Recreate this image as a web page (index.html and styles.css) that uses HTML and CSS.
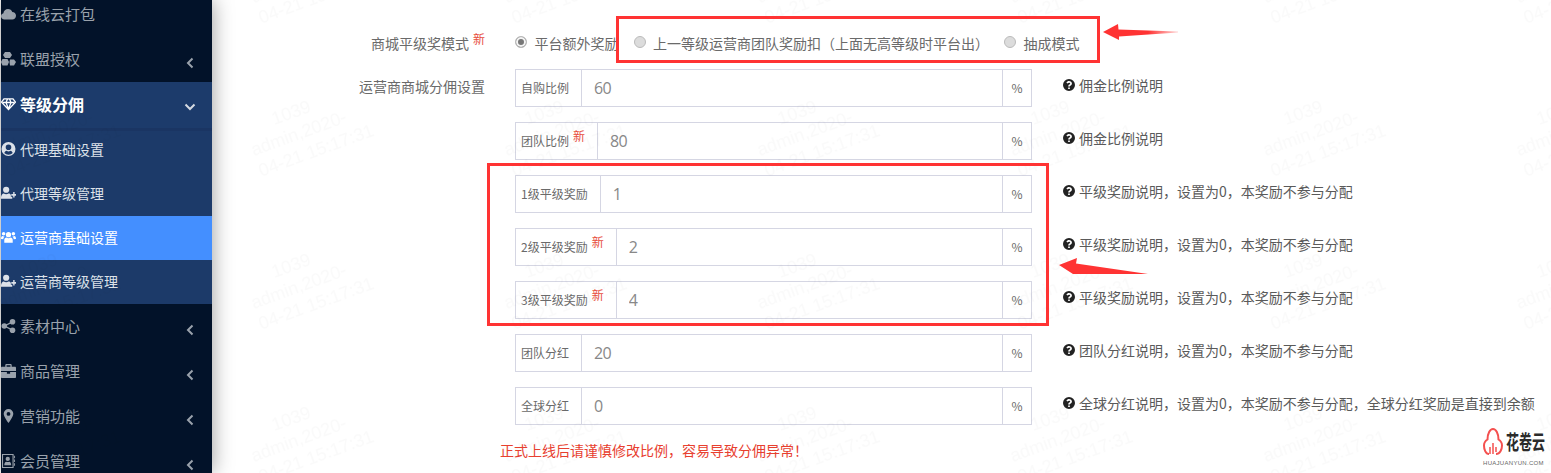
FILE: index.html
```html
<html>

<head>
	<title>运营商基础设置</title>
	<link rel="stylesheet" href="styles.css">
</head>

<body>
	<svg width="0" height="0" class="icon-defs">
		<defs>
			<symbol id="i-help" viewBox="0 0 24 24">
				<path fill-rule="evenodd" d="M12 0a12 12 0 1 0 0 24 12 12 0 0 0 0-24zM10.300 17h3.400v3.200h-3.400zM12 4c3.300 0 5.800 2 5.800 4.900 0 2.100-1.200 3.100-2.500 4-1 .7-1.600 1.200-1.600 2.300h-3.400c0-2.300 1.100-3.400 2.500-4.300 1-.7 1.600-1.100 1.600-1.900 0-1-.9-1.700-2.200-1.700-1.200 0-2.200.8-2.900 1.900L6.800 7.300C8 5.200 9.700 4 12 4z" />
			</symbol>
			<symbol id="i-left" viewBox="0 0 8 12">
				<path d="M6.500 1.500 2 6l4.500 4.500" fill="none" stroke="currentColor" stroke-width="2" />
			</symbol>
			<symbol id="i-down" viewBox="0 0 12 8">
				<path d="M1.500 1.500 6 6l4.500-4.500" fill="none" stroke="currentColor" stroke-width="2" />
			</symbol>
			<symbol id="i-user-plus" viewBox="0 0 16 14">
				<circle cx="5.500" cy="3.500" r="3.300" />
				<path d="M0 13c0-4 1.500-5.500 3-5.500 1.500 1 3.500 1 5 0 1 0 2 .5 2.500 1.500v2H12v2H1z" />
				<path d="M11 8h2V6h1.500v2H16v1.800h-1.500v2H13v-2h-2z" />
			</symbol>
		</defs>
	</svg>

	<div class="page">
		<aside class="sidebar">
			<ul class="menu">
				<li class="menu__item">
					<svg class="menu__icon" viewBox="0 0 15 12"><path d="M3.500 11.500C1.500 11.500 0 10 0 8.200 0 6.700 1 5.500 2.400 5.200 2.700 2.800 4.600 1 7 1c2 0 3.700 1.200 4.300 3 2 0 3.700 1.700 3.700 3.700 0 2.100-1.700 3.800-3.700 3.800z" /></svg>
					<span>在线云打包</span>
				</li>
				<li class="menu__item">
					<svg class="menu__icon" viewBox="0 0 15 14"><path d="M4 0h5l2 3-2 3H4L2 3zM1.500 7h5l1.500 3-1.500 3.500h-5L0 10zM9 7.500h4l2 2.500-2 3.500H9l-.500-3.500z" /></svg>
					<span>联盟授权</span>
					<svg class="menu__arrow"><use href="#i-left" /></svg>
				</li>
				<li class="menu__item menu__item--open">
					<svg class="menu__icon" viewBox="0 0 15 12"><path d="M3 .8h9l2.500 3.400L7.500 11.500.5 4.200zM1.800 4.500h11.400M5 4.500 7.500 11l2.500-6.500M5 4.500 6.500 1M10 4.500 8.500 1" fill="none" stroke="currentColor" stroke-width="1.300" /></svg>
					<span>等级分佣</span>
					<svg class="menu__arrow menu__arrow--down"><use href="#i-down" /></svg>
				</li>
				<li>
					<ul class="submenu">
						<li class="submenu__item">
							<svg class="menu__icon" viewBox="0 0 14 14"><path fill-rule="evenodd" d="M7 0a7 7 0 1 0 0 14A7 7 0 0 0 7 0zm0 2.500a2.800 2.800 0 1 1 0 5.600 2.800 2.800 0 0 1 0-5.600zM2.800 11c.6-1.600 1.500-2.300 2.400-2.300.5.500 1.100.7 1.800.7s1.300-.2 1.800-.7c.9 0 1.800.7 2.400 2.300A5.500 5.500 0 0 1 7 12.800 5.500 5.500 0 0 1 2.800 11z" /></svg>
							<span>代理基础设置</span>
						</li>
						<li class="submenu__item">
							<svg class="menu__icon"><use href="#i-user-plus" /></svg>
							<span>代理等级管理</span>
						</li>
						<li class="submenu__item submenu__item--active">
							<svg class="menu__icon" viewBox="0 0 16 13"><circle cx="8" cy="4" r="2.800" /><circle cx="2.800" cy="3" r="1.900" /><circle cx="13.200" cy="3" r="1.900" /><path d="M3.500 12.500V9.500C3.500 8 4.500 7 5.800 7c1.300 1 3.100 1 4.400 0 1.300 0 2.300 1 2.300 2.500v3zM0 8.500C0 6.500 .8 5.500 1.600 5.500c.8.500 1.500.6 2.300.4-.6.600-1.400 1.300-1.400 3.100zM16 8.500c0-2-.8-3-1.600-3-.8.500-1.500.6-2.300.4.600.6 1.400 1.300 1.400 3.100z" /></svg>
							<span>运营商基础设置</span>
						</li>
						<li class="submenu__item">
							<svg class="menu__icon"><use href="#i-user-plus" /></svg>
							<span>运营商等级管理</span>
						</li>
					</ul>
				</li>
				<li class="menu__item">
					<svg class="menu__icon" viewBox="0 0 14 14"><circle cx="2.800" cy="7" r="2.800" /><circle cx="11" cy="2.800" r="2.800" /><circle cx="11" cy="11.200" r="2.800" /><path d="M3 7l8-4.200M3 7l8 4.200" fill="none" stroke="currentColor" stroke-width="1.400" /></svg>
					<span>素材中心</span>
					<svg class="menu__arrow"><use href="#i-left" /></svg>
				</li>
				<li class="menu__item">
					<svg class="menu__icon" viewBox="0 0 14 13"><path fill-rule="evenodd" d="M4 2.500V1.200C4 .5 4.500 0 5.200 0h3.600C9.500 0 10 .5 10 1.200v1.300h3c.6 0 1 .4 1 1V6.500H0V3.500c0-.6.4-1 1-1zM5.200 1.200v1.300h3.600V1.200zM0 7.500h5.500v1.500h3V7.500H14v4.500c0 .6-.4 1-1 1H1c-.6 0-1-.4-1-1z" /></svg>
					<span>商品管理</span>
					<svg class="menu__arrow"><use href="#i-left" /></svg>
				</li>
				<li class="menu__item">
					<svg class="menu__icon" viewBox="0 0 14 14"><path fill-rule="evenodd" d="M7 0a4.800 4.800 0 0 0-4.800 4.800C2.200 8 7 14 7 14s4.800-6 4.800-9.200A4.800 4.800 0 0 0 7 0zm0 3a1.900 1.900 0 1 1 0 3.800A1.900 1.900 0 0 1 7 3z" /></svg>
					<span>营销功能</span>
					<svg class="menu__arrow"><use href="#i-left" /></svg>
				</li>
				<li class="menu__item">
					<svg class="menu__icon" viewBox="0 0 14 15"><path fill-rule="evenodd" d="M0 0h12.500v15H0zM1.200 1.200v12.600h10.100V1.200zM6.200 3a2.300 2.300 0 1 1 0 4.600 2.300 2.300 0 0 1 0-4.600zM2.500 12c0-2.500 1-3.800 2-3.800 1 .6 2.400.6 3.400 0 1 0 2 1.300 2 3.800zM13 2h1v2.500h-1zM13 6h1v2.500h-1zM13 10h1v2.500h-1z" /></svg>
					<span>会员管理</span>
					<svg class="menu__arrow"><use href="#i-left" /></svg>
				</li>
			</ul>
		</aside>

		<main class="main">
			<form class="form">
				<div class="form__row form__row--radio">
					<label class="form__label">商城平级奖模式<sup class="badge">新</sup></label>
					<div class="radios">
						<label class="radio"><input type="radio" name="mode" checked>平台额外奖励</label>
						<label class="radio"><input type="radio" name="mode">上一等级运营商团队奖励扣（上面无高等级时平台出）</label>
						<label class="radio"><input type="radio" name="mode">抽成模式</label>
					</div>
				</div>

				<div class="form__row">
					<label class="form__label">运营商商城分佣设置</label>
					<div class="input-group">
						<span class="input-group__addon">自购比例</span>
						<input class="input-group__input" type="text" value="60">
						<span class="input-group__unit">%</span>
					</div>
					<p class="help"><svg class="help__icon"><use href="#i-help" /></svg>佣金比例说明</p>
				</div>

				<div class="form__row">
					<span class="form__label"></span>
					<div class="input-group">
						<span class="input-group__addon">团队比例<sup class="badge">新</sup></span>
						<input class="input-group__input" type="text" value="80">
						<span class="input-group__unit">%</span>
					</div>
					<p class="help"><svg class="help__icon"><use href="#i-help" /></svg>佣金比例说明</p>
				</div>

				<div class="form__row">
					<span class="form__label"></span>
					<div class="input-group">
						<span class="input-group__addon">1级平级奖励</span>
						<input class="input-group__input" type="text" value="1">
						<span class="input-group__unit">%</span>
					</div>
					<p class="help"><svg class="help__icon"><use href="#i-help" /></svg>平级奖励说明，设置为0，本奖励不参与分配</p>
				</div>

				<div class="form__row">
					<span class="form__label"></span>
					<div class="input-group">
						<span class="input-group__addon">2级平级奖励<sup class="badge">新</sup></span>
						<input class="input-group__input" type="text" value="2">
						<span class="input-group__unit">%</span>
					</div>
					<p class="help"><svg class="help__icon"><use href="#i-help" /></svg>平级奖励说明，设置为0，本奖励不参与分配</p>
				</div>

				<div class="form__row">
					<span class="form__label"></span>
					<div class="input-group">
						<span class="input-group__addon">3级平级奖励<sup class="badge">新</sup></span>
						<input class="input-group__input" type="text" value="4">
						<span class="input-group__unit">%</span>
					</div>
					<p class="help"><svg class="help__icon"><use href="#i-help" /></svg>平级奖励说明，设置为0，本奖励不参与分配</p>
				</div>

				<div class="form__row">
					<span class="form__label"></span>
					<div class="input-group">
						<span class="input-group__addon">团队分红</span>
						<input class="input-group__input" type="text" value="20">
						<span class="input-group__unit">%</span>
					</div>
					<p class="help"><svg class="help__icon"><use href="#i-help" /></svg>团队分红说明，设置为0，本奖励不参与分配</p>
				</div>

				<div class="form__row">
					<span class="form__label"></span>
					<div class="input-group">
						<span class="input-group__addon">全球分红</span>
						<input class="input-group__input" type="text" value="0">
						<span class="input-group__unit">%</span>
					</div>
					<p class="help"><svg class="help__icon"><use href="#i-help" /></svg>全球分红说明，设置为0，本奖励不参与分配，全球分红奖励是直接到余额</p>
				</div>

				<p class="form__error">正式上线后请谨慎修改比例，容易导致分佣异常！</p>
			</form>
		</main>
	</div>

	<!-- watermark over the form -->
	<svg class="watermark">
		<defs>
			<pattern id="wm" width="253" height="153" patternUnits="userSpaceOnUse" patternTransform="translate(240 57)">
				<g transform="rotate(-20 60 80)" class="watermark__text">
					<text x="40" y="60">1039</text>
					<text x="10" y="82">admin,2020-</text>
					<text x="10" y="104">04-21 15:17:31</text>
				</g>
			</pattern>
		</defs>
		<rect width="100%" height="100%" fill="url(#wm)" />
	</svg>

	<!-- annotations drawn on the screenshot -->
	<div class="mark mark--mode"></div>
	<div class="mark mark--levels"></div>
	<svg class="arrow arrow--mode" viewBox="0 0 76 18">
		<defs>
			<linearGradient id="fade">
				<stop offset="0.6" stop-color="#ff3333" />
				<stop offset="1" stop-color="#ff3333" stop-opacity="0.2" />
			</linearGradient>
		</defs>
		<path d="M0 9 15 1 15.500 6.500 75 8.500V9.500L16 13.500 16 17z" fill="url(#fade)" />
	</svg>
	<svg class="arrow arrow--levels" viewBox="0 0 90 18">
		<path d="M0 8 18 1 17 6.500 89 17 14 17 14 17z" fill="#ff3333" />
	</svg>

	<div class="logo">
		<div class="logo__top">
			<svg class="logo__icon" viewBox="0 0 20 27">
				<path d="M6 26C2.500 26 1 21 1 17.500 1 14 2.800 12.500 4.500 11.500 4.500 5.500 7 1 10 1c3 0 5.500 4.500 5.500 10.500 1.700 1 3.500 2.500 3.500 6 0 4-2 8.500-6 8.500" fill="none" stroke="#f4504f" stroke-width="2" />
				<path d="M7 26v-7M10 26V15M13 24v-5" fill="none" stroke="#f4504f" stroke-width="1.500" />
			</svg>
			<span class="logo__name">花卷云</span>
		</div>
		<span class="logo__domain">HUAJUANYUN.COM</span>
	</div>
</body>

</html>
```

FILE: styles.css
```css
* {
	margin: 0;
	padding: 0;
	box-sizing: border-box;
}

html,
body {
	height: 100%;
	overflow: hidden;
}

body {
	position: relative;
	padding-left: 1px;
	background-color: #fff;
	font-family: "Noto Sans CJK SC", "Liberation Sans", sans-serif;
}

ul {
	list-style: none;
}

.icon-defs {
	position: absolute;
}

.page {
	display: flex;
	height: 100%;
}

/* sidebar */
.sidebar {
	width: 211px;
	flex-shrink: 0;
	overflow: hidden;
	background-color: #021229;
	box-shadow: 0 0 20px rgba(0, 0, 0, 0.4);
}

.menu {
	margin-top: -8px;
}

.menu__item {
	display: flex;
	align-items: center;
	height: 45px;
	padding-bottom: 2px;
	color: #9aa2ac;
	font-size: 15px;
}

.menu__item--open {
	height: 46px;
	background-color: #1c3b6b;
	color: #fff;
	font-size: 16px;
	font-weight: bold;
}

.menu__icon {
	width: 15px;
	height: 14px;
	margin-right: 4px;
	flex-shrink: 0;
	fill: currentColor;
}

.menu__arrow {
	width: 8px;
	height: 12px;
	margin-left: auto;
	margin-right: 18px;
	margin-top: 9px;
	color: #9aa2ac;
}

.menu__arrow--down {
	width: 12px;
	height: 8px;
	margin-right: 16px;
	margin-top: 6px;
	color: #d5dae2;
}

.submenu {
	background-color: #1c3a69;
	box-shadow: inset 0 3px 0 #1a3563;
}

.submenu__item {
	display: flex;
	align-items: center;
	height: 44px;
	padding-bottom: 2px;
	color: #dde2e9;
	font-size: 14px;
}

.submenu__item--active {
	background-color: #448fff;
	color: #fff;
}

/* form */
.main {
	flex: 1;
	padding-top: 24px;
}

.form__row {
	display: flex;
	align-items: flex-start;
	margin-bottom: 15px;
}

.form__row--radio {
	height: 38px;
	margin-bottom: 7px;
	align-items: center;
}

.form__label {
	width: 273px;
	margin-right: 30px;
	flex-shrink: 0;
	color: #6a6a6a;
	font-size: 14px;
	line-height: 34px;
	text-align: right;
}

.badge {
	margin-left: 4px;
	color: #e74c3c;
	font-size: 12px;
	font-weight: normal;
	line-height: 0;
	vertical-align: 5px;
}

.radios {
	display: flex;
	color: #6a6a6a;
	font-size: 14px;
}

.radio {
	display: flex;
	align-items: center;
	margin-right: 15px;
	white-space: nowrap;
}

.radio input {
	appearance: none;
	width: 12px;
	height: 12px;
	margin: -3px 7.500px 0 0;
	border: 1px solid #bbb;
	border-radius: 50%;
	background-color: #dcdcdc;
}

.radio input:checked {
	background-color: #777;
	box-shadow: inset 0 0 0 2px #f4f4f4;
}

.input-group {
	display: flex;
	width: 517px;
	height: 38px;
	flex-shrink: 0;
	border: 1px solid #d5d6e3;
	font-size: 12px;
	color: #6a6a6a;
}

.input-group__addon {
	padding: 0 12px 0 5px;
	border-right: 1px solid #d5d6e3;
	line-height: 36px;
	white-space: nowrap;
}

.input-group__input {
	flex: 1;
	min-width: 0;
	padding: 0 12px;
	border: none;
	outline: none;
	background: transparent;
	color: #888;
	font-family: "Open Sans", "Liberation Sans", sans-serif;
	font-size: 16px;
	letter-spacing: -0.7px;
}

.input-group__unit {
	width: 29px;
	border-left: 1px solid #d5d6e3;
	line-height: 36px;
	text-align: center;
}

.help {
	display: flex;
	align-items: center;
	margin-left: 31px;
	color: #5a5a5a;
	font-size: 14px;
	line-height: 32px;
	white-space: nowrap;
}

.help__icon {
	width: 12px;
	height: 12px;
	margin-right: 4px;
	fill: #222;
}

.form__error {
	margin-left: 288px;
	color: #e8402f;
	font-size: 14px;
	line-height: 20px;
}

/* overlays */
.watermark {
	position: absolute;
	top: 0;
	left: 0;
	width: 100%;
	height: 100%;
	pointer-events: none;
}

.watermark__text {
	fill: rgba(0, 0, 0, 0.018);
	font-family: "Liberation Sans", sans-serif;
	font-size: 18px;
}

.mark {
	position: absolute;
	border: 3px solid #ff3333;
}

.mark--mode {
	left: 616px;
	top: 16px;
	width: 484px;
	height: 47px;
}

.mark--levels {
	left: 487px;
	top: 163px;
	width: 562px;
	height: 163px;
}

.arrow {
	position: absolute;
}

.arrow--mode {
	left: 1103px;
	top: 23px;
	width: 76px;
	height: 18px;
}

.arrow--levels {
	left: 1059px;
	top: 257px;
	width: 90px;
	height: 18px;
}

.logo {
	position: absolute;
	left: 1483px;
	top: 428px;
	display: flex;
	flex-direction: column;
	gap: 4px;
	width: 66px;
}

.logo__top {
	display: flex;
	align-items: center;
}

.logo__icon {
	width: 20px;
	height: 27px;
	margin-right: 3px;
	flex-shrink: 0;
}

.logo__name {
	color: #2b2b2b;
	font-size: 13px;
	font-weight: bold;
	line-height: 26px;
	transform: scaleY(1.6);
	white-space: nowrap;
}

.logo__domain {
	color: #666;
	font-family: "Liberation Sans", sans-serif;
	font-size: 6px;
	letter-spacing: 0.3px;
	line-height: 9px;
	white-space: nowrap;
}
```
